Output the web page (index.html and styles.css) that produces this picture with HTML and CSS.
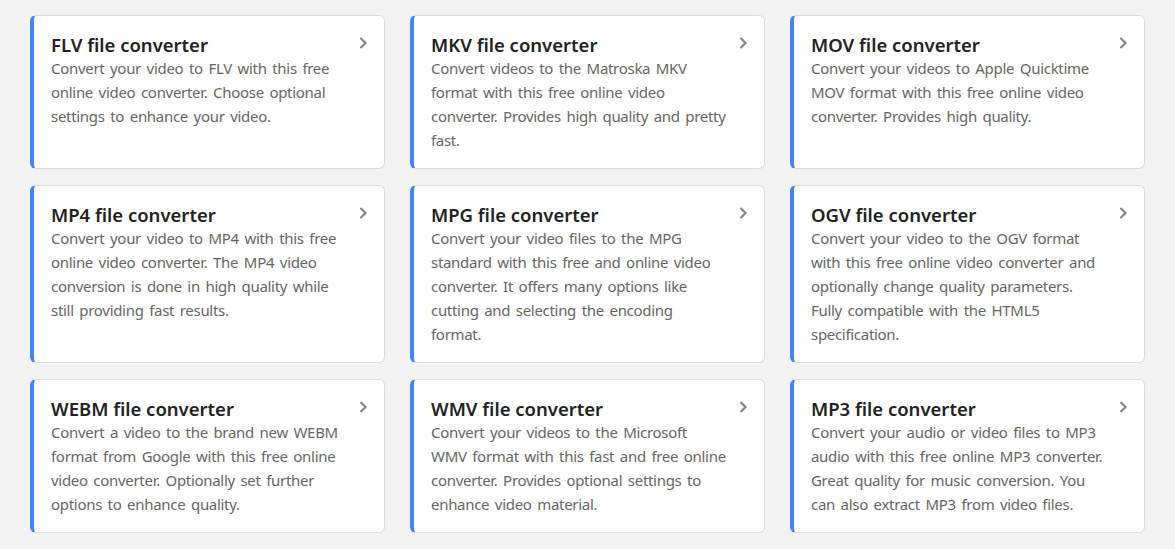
FILE: index.html
```html
<!DOCTYPE html>
<html lang="en">
<head>
    <meta charset="UTF-8">
    <meta name="viewport" content="width=device-width, initial-scale=1.0">
    <title>Video Converters</title>
    <link rel="stylesheet" href="styles.css">
</head>
<body>
<div class="converter-grid">
    <a class="converter" href="#">
        <div class="converter-head">
            <h3>FLV file converter</h3>
            <svg class="chevron" viewBox="0 0 10 14"><path d="M2.5 2 L7.5 7 L2.5 12"/></svg>
        </div>
        <p>Convert your video to FLV with this free online video converter. Choose optional settings to enhance your video.</p>
    </a>
    <a class="converter" href="#">
        <div class="converter-head">
            <h3>MKV file converter</h3>
            <svg class="chevron" viewBox="0 0 10 14"><path d="M2.5 2 L7.5 7 L2.5 12"/></svg>
        </div>
        <p>Convert videos to the Matroska MKV format with this free online video converter. Provides high quality and pretty fast.</p>
    </a>
    <a class="converter" href="#">
        <div class="converter-head">
            <h3>MOV file converter</h3>
            <svg class="chevron" viewBox="0 0 10 14"><path d="M2.5 2 L7.5 7 L2.5 12"/></svg>
        </div>
        <p>Convert your videos to Apple Quicktime MOV format with this free online video converter. Provides high quality.</p>
    </a>
    <a class="converter" href="#">
        <div class="converter-head">
            <h3>MP4 file converter</h3>
            <svg class="chevron" viewBox="0 0 10 14"><path d="M2.5 2 L7.5 7 L2.5 12"/></svg>
        </div>
        <p>Convert your video to MP4 with this free online video converter. The MP4 video conversion is done in high quality while still providing fast results.</p>
    </a>
    <a class="converter" href="#">
        <div class="converter-head">
            <h3>MPG file converter</h3>
            <svg class="chevron" viewBox="0 0 10 14"><path d="M2.5 2 L7.5 7 L2.5 12"/></svg>
        </div>
        <p>Convert your video files to the MPG standard with this free and online video converter. It offers many options like cutting and selecting the encoding format.</p>
    </a>
    <a class="converter" href="#">
        <div class="converter-head">
            <h3>OGV file converter</h3>
            <svg class="chevron" viewBox="0 0 10 14"><path d="M2.5 2 L7.5 7 L2.5 12"/></svg>
        </div>
        <p>Convert your video to the OGV format with this free online video converter and optionally change quality parameters. Fully compatible with the HTML5 specification.</p>
    </a>
    <a class="converter" href="#">
        <div class="converter-head">
            <h3>WEBM file converter</h3>
            <svg class="chevron" viewBox="0 0 10 14"><path d="M2.5 2 L7.5 7 L2.5 12"/></svg>
        </div>
        <p>Convert a video to the brand new WEBM format from Google with this free online video converter. Optionally set further options to enhance quality.</p>
    </a>
    <a class="converter" href="#">
        <div class="converter-head">
            <h3>WMV file converter</h3>
            <svg class="chevron" viewBox="0 0 10 14"><path d="M2.5 2 L7.5 7 L2.5 12"/></svg>
        </div>
        <p>Convert your videos to the Microsoft WMV format with this fast and free online converter. Provides optional settings to enhance video material.</p>
    </a>
    <a class="converter" href="#">
        <div class="converter-head">
            <h3>MP3 file converter</h3>
            <svg class="chevron" viewBox="0 0 10 14"><path d="M2.5 2 L7.5 7 L2.5 12"/></svg>
        </div>
        <p>Convert your audio or video files to MP3 audio with this free online MP3 converter. Great quality for music conversion. You can also extract MP3 from video files.</p>
    </a>
</div>
</body>
</html>
```

FILE: styles.css
```css
/* converter list */
body {
    margin: 0;
    font-family: "Noto Sans", "Open Sans", Arial, sans-serif;
    background-color: #f3f3f3;
}
.converter-grid {
    display: grid;
    grid-template-columns: repeat(3, 1fr);
    column-gap: 25px;
    row-gap: 16px;
    padding: 15px 30px;
}
.converter {
    display: block;
    background-color: #fff;
    border: 1px solid #dcdcdc;
    border-left: 4px solid #4285f4;
    border-radius: 6px;
    padding: 18px 18px 16px 17px;
    text-decoration: none;
}
.converter-head {
    display: flex;
    justify-content: space-between;
    align-items: flex-start;
}
.converter h3 {
    margin: 0;
    font-size: 18.5px;
    font-weight: 600;
    line-height: 22px;
    color: #222;
}
.chevron {
    width: 10px;
    height: 14px;
    margin-top: 2px;
    margin-right: -2px;
    fill: none;
    stroke: #888;
    stroke-width: 2.2;
}
.converter p {
    margin: 0;
    max-width: 296px;
    font-size: 15px;
    line-height: 24px;
    word-spacing: 2px;
    letter-spacing: -0.3px;
    color: #666;
}
```
